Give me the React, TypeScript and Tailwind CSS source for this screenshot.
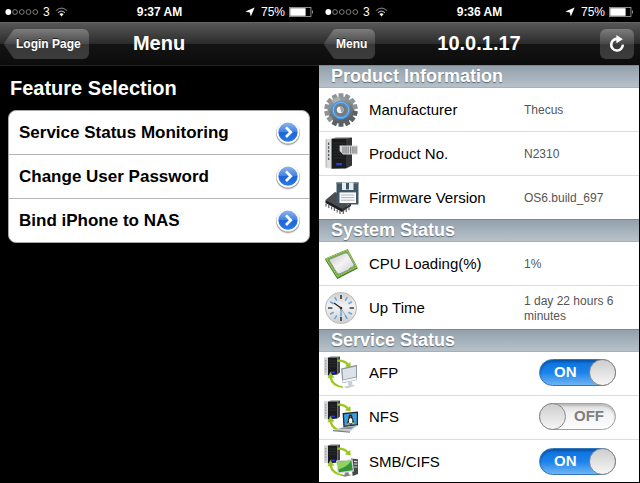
import React, { useState } from 'react';

interface RowData {
    icon: React.ReactNode;
    label: string;
    value: string;
}

const GEAR_TEETH = Array.from({ length: 14 }, (_, i) => (i * 360) / 14);

const GearIcon = () => (
    <svg width="36" height="36" viewBox="0 0 36 36" aria-hidden="true">
        <defs>
            <linearGradient id="gearBody" gradientUnits="userSpaceOnUse" x1="12" y1="1" x2="22" y2="35">
                <stop offset="0" stopColor="#aeb1b3" />
                <stop offset="0.5" stopColor="#757c80" />
                <stop offset="1" stopColor="#4c5458" />
            </linearGradient>
        </defs>
        <circle cx="18" cy="18" r="13.2" fill="url(#gearBody)" />
        {GEAR_TEETH.map((angle) => (
            <path
                key={angle}
                d="M15.4 6 L15.6 1.2 H20.4 L20.6 6 Z"
                fill={angle > 90 && angle < 230 ? '#596165' : '#8e9496'}
                transform={`rotate(${angle} 18 18)`}
            />
        ))}
        <path d="M18 18 L8 8.5 A13.6 13.6 0 0 1 17 4.5 Z" fill="#c9cdd0" opacity="0.4" />
        <circle cx="18" cy="18" r="8" fill="#7d8286" stroke="#3f97e6" strokeWidth="2.4" />
        <circle cx="18" cy="18" r="7.8" fill="none" stroke="#7cc4fb" strokeWidth="0.8" />
        <circle cx="18" cy="18" r="5.6" fill="#72787c" />
        <circle cx="17.2" cy="17.8" r="3.4" fill="#f4f4f4" />
        <path d="M17 14.2 A3.8 3.8 0 0 1 20.8 19 L18 20.4 Z" fill="#9da2a5" />
    </svg>
);

const NasIcon = () => (
    <svg width="36" height="36" viewBox="0 0 36 36" aria-hidden="true">
        <path d="M2.5 3 L8.5 2.4 V32.6 L2.5 32 Z" fill="#dcdddd" />
        <path d="M5.6 6.5 V24" stroke="#55585a" strokeWidth="1.3" strokeDasharray="2.4 1.4" />
        <path d="M3.2 3.4 V31.4" stroke="#a9abad" strokeWidth="0.8" />
        <path d="M8.5 2.8 L13 1.5 H29 L24 3 Z" fill="#6a6a6a" />
        <path d="M8.5 2.8 H23 V32.5 L8.5 32.8 Z" fill="#1a1b1d" />
        <path d="M23 2.8 L29 1.5 V29.5 L23 32.5 Z" fill="#343436" />
        <path d="M10.5 7 H22 M10.5 10 H22 M10.5 13 H22 M10.5 16 H22 M10.5 19 H22 M10.5 22 H22" stroke="#303235" strokeWidth="0.8" />
        <path d="M13.2 27 H19 V29.4 H13.2 Z" fill="#2c3be0" />
        <path d="M16.6 9.5 H35 V18.5 H20 L16.6 15 Z" fill="#dadada" />
        <path d="M20 10.5 V17.5 M22 10.5 V17.5 M25.2 10.5 V17.5 M27.6 10.5 V17.5 M31 10.5 V17.5 M33 10.5 V17.5" stroke="#66696b" strokeWidth="0.9" />
        <path d="M23.4 10.5 V17.5 M29.4 10.5 V17.5" stroke="#9a9c9e" strokeWidth="1.2" />
    </svg>
);

const FloppyIcon = () => (
    <svg width="36" height="36" viewBox="0 0 36 36" aria-hidden="true">
        <path d="M2.5 20 L12 12 L29 20 L19 31 Z" fill="#4a4c4e" />
        <path d="M2.5 20 L19 29 V32 L2.5 23 Z" fill="#1d1e20" />
        <path d="M3 23.5 V26.5 M5.8 25 V28 M8.6 26.6 V29.6 M11.4 28 V31 M14.2 29.6 V32.6 M17 31 V34" stroke="#6b6d6f" strokeWidth="1.3" />
        <path d="M19 29 L28 23 V26 L19 32 Z" fill="#303234" />
        <path d="M20.4 31 V34 M23.2 29 V32 M26 27.2 V30.2" stroke="#6b6d6f" strokeWidth="1.3" />
        <path d="M13.5 2.5 H35.5 V24.5 H15.5 L13.5 22.5 Z" fill="#405766" />
        <path d="M13.5 2.5 H35.5 V4 H13.5 Z" fill="#56707f" />
        <path d="M19 2.5 H30.5 V10 H19 Z" fill="#e7ecef" />
        <path d="M23 3 H26 V9.4 H23 Z" fill="#405766" />
        <path d="M16.5 12.4 H33 V23 H16.5 Z" fill="#fbfbfb" />
        <path d="M18 15 H31.5 M18 17.6 H31.5 M18 20.2 H31.5" stroke="#a3abb0" strokeWidth="0.9" />
    </svg>
);

const CpuIcon = () => (
    <svg width="36" height="36" viewBox="0 0 36 36" aria-hidden="true">
        <defs>
            <linearGradient id="cpuLid" x1="0" y1="0" x2="1" y2="1">
                <stop offset="0" stopColor="#c2c3c2" />
                <stop offset="0.5" stopColor="#f4f4f4" />
                <stop offset="1" stopColor="#c9cac9" />
            </linearGradient>
        </defs>
        <path d="M2 13.4 L24.7 4 L34.7 22.6 L14.3 33 Z" fill="#3f6f24" />
        <path d="M2 12.4 L24.7 3 L34.7 21.4 L14.3 31.8 Z" fill="#6fae3d" />
        <path d="M3.4 12.8 L24.2 4.2 L33.2 21 L14.6 30.4 Z" fill="none" stroke="#c3d98b" strokeWidth="0.8" strokeDasharray="1.4 1.2" />
        <path d="M7.4 13 L22 7 Q24.4 6.4 25.4 8.6 L31 18.6 Q31.4 20.4 29.6 21 Q26.6 21.4 26 23.6 L17.4 27.6 Q14.8 28.6 13.6 26.4 L6.6 15 Q6 13.6 7.4 13 Z" fill="url(#cpuLid)" stroke="#8d928b" strokeWidth="0.9" />
    </svg>
);

const ClockIcon = () => (
    <svg width="36" height="36" viewBox="0 0 36 36" aria-hidden="true">
        <defs>
            <linearGradient id="clockFace" x1="0" y1="0" x2="0" y2="1">
                <stop offset="0" stopColor="#cfcfcf" />
                <stop offset="0.45" stopColor="#f3f3f3" />
                <stop offset="1" stopColor="#cdcdcd" />
            </linearGradient>
        </defs>
        <circle cx="18" cy="18" r="15.6" fill="url(#clockFace)" stroke="#bcbcbc" strokeWidth="1" />
        <path d="M18 5 V9 M18 27 V31 M5 18 H9.4 M26.6 18 H31" stroke="#3c3c3c" strokeWidth="1.7" />
        {[30, 60, 120, 150, 210, 240, 300, 330].map((angle) => (
            <path key={angle} d="M18 5.5 V9.5" stroke="#62a8e6" strokeWidth="1.5" transform={`rotate(${angle} 18 18)`} />
        ))}
        <path d="M18 18 L11 13" stroke="#2e2e2e" strokeWidth="1.5" />
        <path d="M18 18 V26.5" stroke="#5ba2e0" strokeWidth="1.5" />
        <path d="M18 18 L23 26.5" stroke="#888" strokeWidth="0.7" />
        <circle cx="18" cy="18" r="1.3" fill="#2e2e2e" />
    </svg>
);

// Small tower with the two green sync arrows, shared by every service
const ServerSync: React.FC<{ children: React.ReactNode }> = ({ children }) => (
    <svg width="36" height="36" viewBox="0 0 36 36" aria-hidden="true">
        <path d="M1 2.6 L5 2.2 V20.6 L1 19.8 Z" fill="#d2d4d5" />
        <path d="M2.8 5 V17" stroke="#85888a" strokeWidth="0.9" strokeDasharray="1.6 1.2" />
        <path d="M5 2.4 L8 1.4 H17 L14.4 2.6 Z" fill="#777" />
        <path d="M5 2.4 H14.4 V19.6 L5 20.6 Z" fill="#1b1c1e" />
        <path d="M14.4 2.4 L17 1.4 V17.4 L14.4 19.6 Z" fill="#47484a" />
        <path d="M6 6 H13.4 M6 8.6 H13.4 M6 11.2 H13.4" stroke="#333538" strokeWidth="0.7" />
        <path d="M7.4 16.6 H12 V18.2 H7.4 Z" fill="#2b39dd" />
        <path d="M14.4 4.6 Q21.4 4 25.6 8.4 L27.4 7 L27.6 12.6 L21.8 11.2 L23.6 9.8 Q20.2 6.4 14.4 6.8 Z" fill="#9cc723" />
        <path d="M20 31.4 Q10.4 29.6 9 22.8 L11.4 22.4 L7.2 17 L4.4 23.4 L6.6 23 Q8 31.6 20 33 Z" fill="#9cc723" />
        {children}
    </svg>
);

const AfpIcon = () => (
    <ServerSync>
        <path d="M18 13.6 L34 9.8 V25 L19.4 28.2 Z" fill="#8f98a0" />
        <path d="M19.4 14.6 L33 11.4 V21.8 L20.2 24.4 Z" fill="#dbe2e9" />
        <path d="M19.4 25.2 L33.6 22.4 V24.8 L19.6 27.8 Z" fill="#f4f5f6" />
        <path d="M25 27 L29 26.2 L29.6 30 L33 30.6 L24 33.6 L20.4 32 L25.4 30.8 Z" fill="#ccd0d3" />
    </ServerSync>
);

const NfsIcon = () => (
    <ServerSync>
        <path d="M19.6 14 L35 12.6 V26.4 L20.4 28.4 Z" fill="#24282c" />
        <path d="M21 15.2 L33.8 14 V25.2 L21.6 26.8 Z" fill="#3a9ee2" />
        <path d="M27.4 15.4 Q29.6 15.4 29.4 18.6 L31.2 23.6 L29 25.4 H26 L24 24.4 L25.6 18.8 Q25.4 15.6 27.4 15.4 Z" fill="#17181a" />
        <ellipse cx="27.6" cy="21.8" rx="1.8" ry="2.8" fill="#fff" />
        <path d="M23.6 25.4 L25.8 23.2 L27 25.4 Z M28.4 25.2 L29.8 22.8 L31.8 24.4 Z" fill="#f5b51c" />
        <path d="M26.6 17.6 H28.4 L27.5 18.8 Z" fill="#f5b51c" />
        <path d="M20.4 28 L35 26.2 L27 32.6 L10 31 Z" fill="#c9cdd1" />
        <path d="M20.8 28.6 L31.6 27.4 L28 30 L15.8 29.8 Z" fill="#868c91" />
        <path d="M10 31 L27 32.6 V33.8 L10 32.2 Z" fill="#7b8085" />
    </ServerSync>
);

const SmbIcon = () => (
    <ServerSync>
        <path d="M28 15.4 L35 16.2 V31 L29.6 33 Z" fill="#44484b" />
        <path d="M31 18.4 L34.4 18.6 M31 21 L34.4 21.2 M31 24 L34.4 24" stroke="#d5d8da" strokeWidth="1.2" />
        <path d="M13 17.6 L29.6 16.2 L31 28.4 L14.6 30.6 Z" fill="#d7dadc" />
        <path d="M14.4 18.8 L28.4 17.4 L29.8 27.2 L15.8 29.2 Z" fill="#35933a" />
        <path d="M14.4 18.8 L28.4 17.4 Q24 24 15.4 26.4 Z" fill="#8fd45c" />
        <path d="M21.6 29.8 L25.4 29.2 L26 31.4 L29 32 L22 33.8 L18 32.6 L22 31.6 Z" fill="#7e8386" />
    </ServerSync>
);

const DetailArrow = () => (
    <svg width="26" height="26" viewBox="0 0 26 26" aria-hidden="true">
        <defs>
            <linearGradient id="discFill" x1="0" y1="0" x2="0" y2="1">
                <stop offset="0" stopColor="#8db4ee" />
                <stop offset="0.48" stopColor="#4382e2" />
                <stop offset="0.52" stopColor="#1c64d8" />
                <stop offset="1" stopColor="#2a7bea" />
            </linearGradient>
        </defs>
        <circle cx="13" cy="13.6" r="12.2" fill="#000" opacity="0.12" />
        <circle cx="13" cy="13" r="11.8" fill="#000" opacity="0.3" />
        <circle cx="13" cy="12.2" r="11.4" fill="#fff" />
        <circle cx="13" cy="12.2" r="9.6" fill="url(#discFill)" />
        <path d="M11 7.4 L15.8 12.2 L11 17" fill="none" stroke="#fff" strokeWidth="2.7" />
    </svg>
);

const StatusBar: React.FC<{ time: string }> = ({ time }) => (
    <div className="grid h-[22px] grid-cols-[1fr_auto_1fr] items-center bg-black pl-[5px] pr-[6px] pt-[2px] text-xs text-white">
        <div className="flex items-center gap-[3px]">
            <svg width="35" height="8" viewBox="0 0 35 8" aria-hidden="true">
                <circle cx="3.3" cy="4" r="2.9" fill="#fff" />
                {[10, 16.8, 23.5, 30.3].map((cx) => (
                    <circle key={cx} cx={cx} cy="4" r="2.4" fill="none" stroke="#999" strokeWidth="0.8" />
                ))}
            </svg>
            <span>3</span>
            <svg className="ml-[2px]" width="13" height="10" viewBox="0 0 13 10" fill="none" aria-hidden="true">
                <path d="M1 3.6 Q6.5 -1.4 12 3.6" stroke="#777" strokeWidth="1.2" />
                <path d="M3 5.8 Q6.5 2.6 10 5.8" stroke="#a5a5a5" strokeWidth="1.2" />
                <path d="M4.4 7 Q6.5 5.4 8.6 7 L6.5 9.4 Z" fill="#fff" />
            </svg>
        </div>
        <span className="font-bold">{time}</span>
        <div className="flex items-center justify-end">
            <svg className="mr-[6px]" width="10" height="10" viewBox="0 0 10 10" aria-hidden="true">
                <path d="M9.6 0.4 L5.8 9.6 L4.8 5.4 L0.4 4.6 Z" fill="#fff" />
            </svg>
            <span>75%</span>
            <svg className="ml-1" width="25" height="10" viewBox="0 0 25 10" aria-hidden="true">
                <rect x="0.5" y="0.5" width="21.4" height="9" fill="none" stroke="#999" strokeWidth="0.9" />
                <rect x="1.2" y="1.2" width="15.4" height="7.6" fill="#fff" />
                <path d="M23 3 Q25 5 23 7 Z" fill="#aaa" />
            </svg>
        </div>
    </div>
);

interface NavBarProps {
    title: string;
    back: string;
    children?: React.ReactNode;
}

const NavBar: React.FC<NavBarProps> = ({ title, back, children }) => (
    <header className="grid h-[43px] grid-cols-[1fr_auto_1fr] items-center border-t border-[#666] bg-[linear-gradient(#575757,#2b2b2b_50%,#141414_50%,#0c0c0c)] pl-1 pr-[6px]">
        <button className="flex h-[30px] items-stretch justify-self-start text-xs font-bold text-white">
            <svg className="shrink-0" width="12" height="30" viewBox="0 0 12 30" aria-hidden="true">
                <defs>
                    <linearGradient id="backTip" x1="0" y1="0" x2="0" y2="1">
                        <stop offset="0" stopColor="#7d7d7d" />
                        <stop offset="0.5" stopColor="#484848" />
                        <stop offset="0.52" stopColor="#383838" />
                        <stop offset="1" stopColor="#3c3c3c" />
                    </linearGradient>
                </defs>
                <path d="M12 0 Q10 0 8.6 2 L0.6 13.6 Q0 15 0.6 16.4 L8.6 28 Q10 30 12 30 Z" fill="url(#backTip)" />
            </svg>
            <span className="flex items-center rounded-r-md bg-[linear-gradient(#7d7d7d,#484848_50%,#383838_52%,#3c3c3c)] pr-2 pb-px [text-shadow:0_-1px_0_#222]">{back}</span>
        </button>
        <h1 className="pb-[2px] text-xl font-bold text-white">{title}</h1>
        {children}
    </header>
);

const FEATURES = ['Service Status Monitoring', 'Change User Password', 'Bind iPhone to NAS'];

const MenuScreen = () => (
    <section className="bg-black">
        <StatusBar time="9:37 AM" />
        <NavBar title="Menu" back="Login Page" />
        <div className="border-t border-[#222] pl-2 pr-[10px]">
            <h2 className="py-2 pl-[2px] text-xl font-bold text-white">Feature Selection</h2>
            <ul className="divide-y divide-[#b5b5b5] rounded-lg border border-[#a8a8a8] bg-white">
                {FEATURES.map((feature) => (
                    <li key={feature}>
                        <button className="flex h-[43px] w-full items-center justify-between pl-[10px] pr-2 text-left text-[17px] font-bold text-black">
                            {feature}
                            <DetailArrow />
                        </button>
                    </li>
                ))}
            </ul>
        </div>
    </section>
);

const SectionTitle: React.FC<{ children: string }> = ({ children }) => (
    <h2 className="h-[23px] border-b border-t border-b-[#a5b0b9] border-t-[#7b8994] bg-[linear-gradient(#93a1ac,#b7c1ca)] pl-3 text-lg leading-[21px] font-bold text-white [text-shadow:0_1px_1px_#5d6a75]">
        {children}
    </h2>
);

const InfoRow: React.FC<RowData> = ({ icon, label, value }) => (
    <div className="flex h-11 items-center border-b border-[#dcdcdc] pl-1 last:h-[43px] last:border-b-0">
        {icon}
        <dt className="w-[165px] shrink-0 pl-[10px] pt-[2px] text-[15px] text-black">{label}</dt>
        <dd className="w-[100px] pt-[2px] text-xs leading-[15px] text-[#555]">{value}</dd>
    </div>
);

const ServiceRow: React.FC<{ icon: React.ReactNode; label: string; initial: boolean }> = ({ icon, label, initial }) => {
    const [on, setOn] = useState(initial);

    return (
        <label className="flex h-11 items-center border-b border-[#dcdcdc] pb-[2px] pl-1 pr-[23px] last:border-b-0">
            {icon}
            <span className="grow pl-[10px] pt-[2px] text-[15px] text-black">{label}</span>
            <input type="checkbox" className="sr-only" checked={on} onChange={(e) => setOn(e.target.checked)} />
            <span
                className={`flex h-[27px] w-[77px] items-center justify-between rounded-full border text-[15px] font-bold ${
                    on
                        ? 'flex-row-reverse border-[#3576b8] bg-[linear-gradient(#0b70dd,#1b83ea_50%,#6fb4f4)] text-white shadow-[inset_0_2px_2px_#0a55a8]'
                        : 'border-[#a0a0a0] bg-[linear-gradient(#dadada,#f3f3f3_40%,#fdfdfd)] text-[#808080] shadow-[inset_0_2px_2px_#bbb]'
                }`}
            >
                <span className="-m-px size-[27px] rounded-full border border-[#888] bg-[linear-gradient(#cdcdcd,#f6f6f6)]" />
                <span className={on ? 'pl-[14px]' : 'pr-[11px]'}>{on ? 'ON' : 'OFF'}</span>
            </span>
        </label>
    );
};

const PRODUCT: RowData[] = [
    { icon: <GearIcon />, label: 'Manufacturer', value: 'Thecus' },
    { icon: <NasIcon />, label: 'Product No.', value: 'N2310' },
    { icon: <FloppyIcon />, label: 'Firmware Version', value: 'OS6.build_697' },
];

const SYSTEM: RowData[] = [
    { icon: <CpuIcon />, label: 'CPU Loading(%)', value: '1%' },
    { icon: <ClockIcon />, label: 'Up Time', value: '1 day 22 hours 6 minutes' },
];

const StatusScreen = () => (
    <section className="bg-black">
        <StatusBar time="9:36 AM" />
        <NavBar title="10.0.1.17" back="Menu">
            <button
                aria-label="Refresh"
                className="flex h-[30px] w-[34px] items-center justify-center justify-self-end rounded-md bg-[linear-gradient(#7d7d7d,#484848_50%,#383838_52%,#3c3c3c)]"
            >
                <svg width="18" height="18" viewBox="0 0 18 18" fill="none" aria-hidden="true">
                    <path d="M10 4 A5.8 5.8 0 1 0 14.8 9.6" stroke="#fff" strokeWidth="2.6" />
                    <path d="M8.4 0 L14.8 4.2 L8.4 8.2 Z" fill="#fff" />
                </svg>
            </button>
        </NavBar>
        <div className="-ml-px mr-px bg-white">
            <SectionTitle>Product Information</SectionTitle>
            <dl>
                {PRODUCT.map((row) => (
                    <InfoRow key={row.label} {...row} />
                ))}
            </dl>
            <SectionTitle>System Status</SectionTitle>
            <dl>
                {SYSTEM.map((row) => (
                    <InfoRow key={row.label} {...row} />
                ))}
            </dl>
            <SectionTitle>Service Status</SectionTitle>
            <div>
                <ServiceRow icon={<AfpIcon />} label="AFP" initial />
                <ServiceRow icon={<NfsIcon />} label="NFS" initial={false} />
                <ServiceRow icon={<SmbIcon />} label="SMB/CIFS" initial />
            </div>
        </div>
    </section>
);

export default function App() {
    return (
        <main className="grid h-screen grid-cols-2 overflow-hidden border-b border-black bg-black font-['Liberation_Sans',Arial,sans-serif]">
            <MenuScreen />
            <StatusScreen />
        </main>
    );
}
